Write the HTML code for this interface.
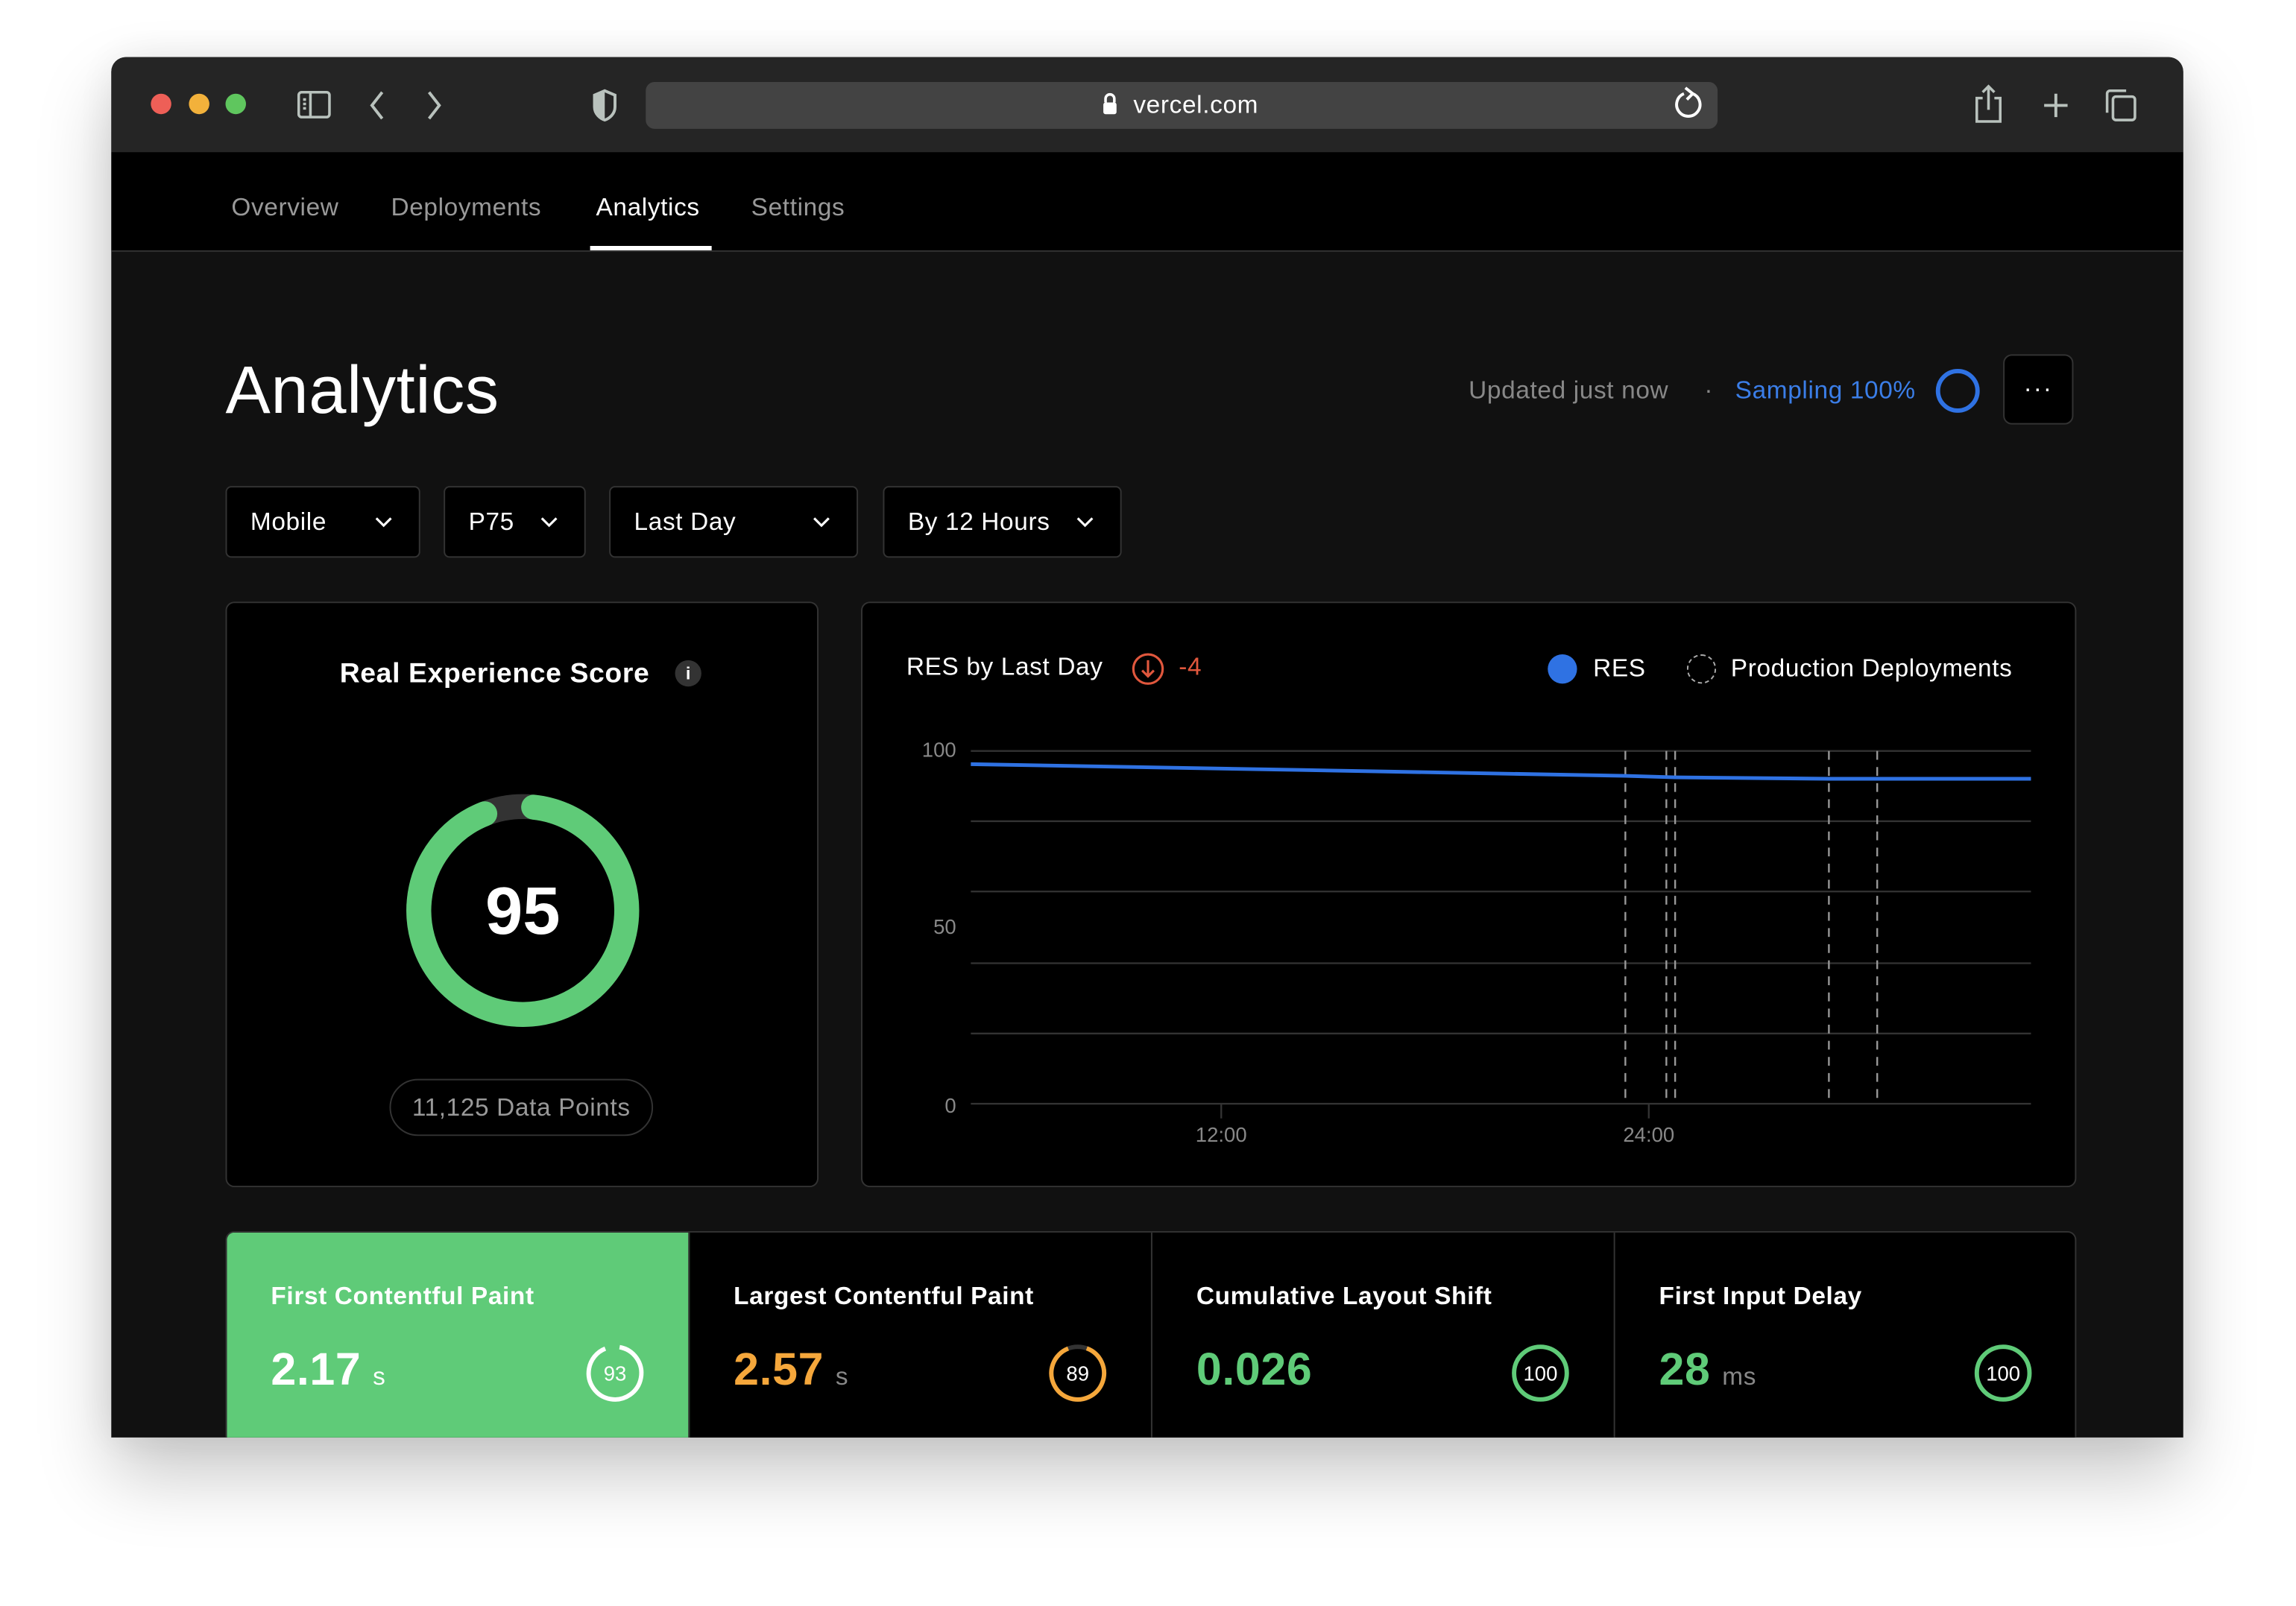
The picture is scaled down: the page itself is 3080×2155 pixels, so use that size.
<!DOCTYPE html>
<html><head><meta charset="utf-8"><style>
html,body{margin:0;padding:0;background:#fff;width:3080px;height:2155px;overflow:hidden}
#w{position:absolute;left:0;top:0;width:1568px;height:1097px;transform:scale(1.96429);transform-origin:0 0;font-family:"Liberation Sans",sans-serif;letter-spacing:0.02em}
.a{position:absolute}
.win{left:76px;top:39px;width:1415px;height:943px;background:#111;border-radius:10px 10px 0 0;overflow:hidden;box-shadow:0 25px 50px rgba(0,0,0,.22),0 0 30px rgba(0,0,0,.08)}
.tb{left:0;top:0;width:1415px;height:65px;background:#252525}
.nav{left:0;top:65px;width:1415px;height:67px;background:#000;border-bottom:1px solid #333}
.t{position:absolute;white-space:nowrap}
.dd{position:absolute;top:293px;background:#000;border:1px solid #333;border-radius:4px;color:#fff;font-size:17px;line-height:47px;box-sizing:border-box;height:49px}
.dd span{position:absolute;left:16px}
.dd svg{position:absolute;top:17px}
.card{position:absolute;background:#000;border:1px solid #333;border-radius:6px;box-sizing:border-box}
.cell{position:absolute;top:0;height:150px;width:316px;border-right:1px solid #333;box-sizing:border-box}
.cell .ti{position:absolute;left:30px;top:34px;font-size:17px;font-weight:bold;color:#fff}
.cell .v{position:absolute;left:30px;top:76px;font-size:31px;font-weight:bold}
.cell .v small{font-size:17px;color:#888;font-weight:normal;margin-left:8px}
.cell svg{position:absolute;left:244px;top:75px;letter-spacing:0}
</style></head><body><div id="w">
<div class="a win">
 <div class="a tb">
  <div class="a" style="left:27px;top:25px;width:14px;height:14px;border-radius:50%;background:#ee5f57"></div>
  <div class="a" style="left:53px;top:25px;width:14px;height:14px;border-radius:50%;background:#f2b13b"></div>
  <div class="a" style="left:78px;top:25px;width:14px;height:14px;border-radius:50%;background:#5fc65e"></div>
  <svg class="a" style="left:126px;top:22px" width="26" height="22" viewBox="0 0 26 22" fill="none" stroke="#b9c2bd" stroke-width="1.8"><rect x="2" y="2" width="21" height="17" rx="2"/><line x1="10" y1="2" x2="10" y2="19"/><line x1="5" y1="7" x2="7" y2="7"/><line x1="5" y1="10" x2="7" y2="10"/><line x1="5" y1="13" x2="7" y2="13"/></svg>
  <svg class="a" style="left:174px;top:22px" width="14" height="22" viewBox="0 0 14 22" fill="none" stroke="#b9c2bd" stroke-width="2"><path d="M11 2 L4 11 L11 20"/></svg>
  <svg class="a" style="left:214px;top:22px" width="14" height="22" viewBox="0 0 14 22" fill="none" stroke="#b9c2bd" stroke-width="2"><path d="M3 2 L10 11 L3 20"/></svg>
  <svg class="a" style="left:328px;top:21px" width="18" height="24" viewBox="0 0 18 24"><path d="M9 2 L16 5 V13 C16 18 12 21 9 22 C6 21 2 18 2 13 V5 Z" fill="none" stroke="#b9c2bd" stroke-width="2"/><path d="M9 2 L2 5 V13 C2 18 6 21 9 22 Z" fill="#b9c2bd"/></svg>
  <div class="a" style="left:365px;top:17px;width:732px;height:32px;background:#434343;border-radius:6px"></div>
  <svg class="a" style="left:676px;top:24px" width="12" height="16" viewBox="0 0 12 16"><path d="M3 7 V4.5 A3 3 0 0 1 9 4.5 V7" fill="none" stroke="#fff" stroke-width="1.8"/><rect x="1.5" y="7" width="9" height="8" rx="1.5" fill="#fff"/></svg>
  <div class="t" style="left:698px;top:23px;font-size:17px;color:#fff">vercel.com</div>
  <svg class="a" style="left:1066px;top:20px" width="22" height="24" viewBox="0 0 22 24" fill="none" stroke="#fff" stroke-width="2"><path d="M14 5 A8 8 0 1 1 8 5"/><path d="M9 1 L14 5 L10 9"/></svg>
  <svg class="a" style="left:1271px;top:18px" width="22" height="28" viewBox="0 0 22 28" fill="none" stroke="#b9c2bd" stroke-width="1.8"><path d="M7 10 H3 V26 H19 V10 H15"/><path d="M11 18 V2 M7 6 L11 2 L15 6"/></svg>
  <svg class="a" style="left:1319px;top:24px" width="18" height="18" viewBox="0 0 18 18" stroke="#b9c2bd" stroke-width="2"><path d="M9 1 V17 M1 9 H17"/></svg>
  <svg class="a" style="left:1360px;top:21px" width="24" height="24" viewBox="0 0 24 24" fill="none" stroke="#b9c2bd" stroke-width="1.8"><rect x="7" y="6" width="15" height="16" rx="2"/><path d="M3 17 V4 A2 2 0 0 1 5 2 H16"/></svg>
 </div>
 <div class="a nav">
  <div class="t" style="left:82px;top:28px;font-size:17px;color:#999">Overview</div>
  <div class="t" style="left:191px;top:28px;font-size:17px;color:#999">Deployments</div>
  <div class="t" style="left:331px;top:28px;font-size:17px;color:#fff">Analytics</div>
  <div class="t" style="left:437px;top:28px;font-size:17px;color:#999">Settings</div>
  <div class="a" style="left:327px;top:64px;width:83px;height:3px;background:#fff"></div>
 </div>
 <div class="t" style="left:78px;top:200px;font-size:46px;color:#fff;font-weight:500">Analytics</div>
 <div class="t" style="left:927px;top:218px;font-size:17px;color:#888">Updated just now</div>
 <div class="t" style="left:1088px;top:218px;font-size:17px;color:#888">·</div>
 <div class="t" style="left:1109px;top:218px;font-size:17px;color:#3b7ee8;font-weight:500">Sampling 100%</div>
 <div class="a" style="left:1246px;top:213px;width:24px;height:24px;border:3px solid #2f72e3;border-radius:50%"></div>
 <div class="a" style="left:1292px;top:203px;width:48px;height:48px;box-sizing:border-box;background:#000;border:1px solid #333;border-radius:6px;color:#fff;text-align:center;line-height:46px;font-size:17px;letter-spacing:1px">···</div>

 <div class="dd" style="left:78px;width:133px"><span>Mobile</span><svg style="left:100px" width="14" height="14" viewBox="0 0 14 14" fill="none" stroke="#fff" stroke-width="1.6"><path d="M2 4 L7 9 L12 4"/></svg></div>
 <div class="dd" style="left:227px;width:97px"><span>P75</span><svg style="left:64px" width="14" height="14" viewBox="0 0 14 14" fill="none" stroke="#fff" stroke-width="1.6"><path d="M2 4 L7 9 L12 4"/></svg></div>
 <div class="dd" style="left:340px;width:170px"><span>Last Day</span><svg style="left:137px" width="14" height="14" viewBox="0 0 14 14" fill="none" stroke="#fff" stroke-width="1.6"><path d="M2 4 L7 9 L12 4"/></svg></div>
 <div class="dd" style="left:527px;width:163px"><span>By 12 Hours</span><svg style="left:130px" width="14" height="14" viewBox="0 0 14 14" fill="none" stroke="#fff" stroke-width="1.6"><path d="M2 4 L7 9 L12 4"/></svg></div>

 <div class="card" style="left:78px;top:372px;width:405px;height:400px">
  <div class="t" style="left:77px;top:38px;font-size:19px;color:#fff;font-weight:bold">Real Experience Score</div>
  <div class="a" style="left:306px;top:39px;width:18px;height:18px;border-radius:50%;background:#333;color:#fff;font-size:12px;text-align:center;line-height:18px;font-weight:bold;letter-spacing:0">i</div>
  <svg class="a" style="left:112px;top:120px;letter-spacing:0" width="180" height="180" viewBox="0 0 180 180">
   <circle cx="90" cy="90" r="71" fill="none" stroke="#333" stroke-width="17"/>
   <circle cx="90" cy="90" r="71" fill="none" stroke="#5fcb78" stroke-width="17" stroke-linecap="round" stroke-dasharray="412 446" transform="rotate(-84 90 90)"/>
   <text x="90" y="106" text-anchor="middle" font-family="Liberation Sans" font-size="46" font-weight="bold" fill="#fff">95</text>
  </svg>
  <div class="a" style="left:111px;top:325px;width:180px;height:39px;border:1px solid #333;border-radius:20px;box-sizing:border-box;color:#999;font-size:17px;text-align:center;line-height:37px">11,125 Data Points</div>
 </div>

 <div class="card" style="left:512px;top:372px;width:830px;height:400px">
  <div class="t" style="left:30px;top:34px;font-size:17px;color:#fff;font-weight:500">RES by Last Day</div>
  <svg class="a" style="left:183px;top:33px" width="24" height="24" viewBox="0 0 24 24" fill="none" stroke="#e0573d" stroke-width="1.6"><circle cx="12" cy="12" r="10"/><path d="M12 6 V17 M8 13 L12 17 L16 13"/></svg>
  <div class="t" style="left:216px;top:34px;font-size:17px;color:#e0573d">-4</div>
  <div class="a" style="left:468px;top:35px;width:20px;height:20px;border-radius:50%;background:#2f72e3"></div>
  <div class="t" style="left:499px;top:35px;font-size:17px;color:#fff">RES</div>
  <div class="a" style="left:563px;top:35px;width:18px;height:18px;border-radius:50%;border:1px dashed #aaa"></div>
  <div class="t" style="left:593px;top:35px;font-size:17px;color:#fff">Production Deployments</div>
  <svg class="a" style="left:0;top:0;letter-spacing:0" width="830" height="400" font-family="Liberation Sans" font-size="14" fill="#888">
   <g stroke="#333" stroke-width="1.2">
    <line x1="74" y1="101" x2="798" y2="101"/><line x1="74" y1="149" x2="798" y2="149"/><line x1="74" y1="197" x2="798" y2="197"/><line x1="74" y1="246" x2="798" y2="246"/><line x1="74" y1="294" x2="798" y2="294"/><line x1="74" y1="342" x2="798" y2="342"/>
    <line x1="245" y1="342" x2="245" y2="352"/><line x1="537" y1="342" x2="537" y2="352"/>
   </g>
   <g stroke="#999" stroke-width="1.2" stroke-dasharray="6 5">
    <line x1="521" y1="101" x2="521" y2="342"/><line x1="549" y1="101" x2="549" y2="342"/><line x1="555" y1="101" x2="555" y2="342"/><line x1="660" y1="101" x2="660" y2="342"/><line x1="693" y1="101" x2="693" y2="342"/>
   </g>
   <polyline points="74,110 300,114 521,118 555,119 660,120 798,120" fill="none" stroke="#2f72e3" stroke-width="2.5"/>
   <text x="64" y="105" text-anchor="end">100</text><text x="64" y="226" text-anchor="end">50</text><text x="64" y="348" text-anchor="end">0</text>
   <text x="245" y="368" text-anchor="middle">12:00</text><text x="537" y="368" text-anchor="middle">24:00</text>
  </svg>
 </div>

 <div class="card" style="left:78px;top:802px;width:1264px;height:160px;overflow:hidden">
  <div class="cell" style="left:0;background:#5fcb78;border-color:#333">
   <div class="ti">First Contentful Paint</div>
   <div class="v" style="color:#fff">2.17<small style="color:#fff">s</small></div>
   <svg width="42" height="42" viewBox="0 0 42 42"><circle cx="21" cy="21" r="18" fill="none" stroke="#fff" stroke-width="3" stroke-dasharray="103 113" transform="rotate(-80 21 21)"/><text x="21" y="26" text-anchor="middle" font-family="Liberation Sans" font-size="14" fill="#fff">93</text></svg>
  </div>
  <div class="cell" style="left:316px">
   <div class="ti">Largest Contentful Paint</div>
   <div class="v" style="color:#f5a73b">2.57<small>s</small></div>
   <svg width="42" height="42" viewBox="0 0 42 42"><circle cx="21" cy="21" r="18" fill="none" stroke="#333" stroke-width="3"/><circle cx="21" cy="21" r="18" fill="none" stroke="#f5a73b" stroke-width="3" stroke-dasharray="100 113" transform="rotate(-70 21 21)"/><text x="21" y="26" text-anchor="middle" font-family="Liberation Sans" font-size="14" fill="#fff">89</text></svg>
  </div>
  <div class="cell" style="left:632px">
   <div class="ti">Cumulative Layout Shift</div>
   <div class="v" style="color:#5fcb78">0.026</div>
   <svg width="42" height="42" viewBox="0 0 42 42"><circle cx="21" cy="21" r="18" fill="none" stroke="#5fcb78" stroke-width="3"/><text x="21" y="26" text-anchor="middle" font-family="Liberation Sans" font-size="14" fill="#fff">100</text></svg>
  </div>
  <div class="cell" style="left:948px;border-right:none">
   <div class="ti">First Input Delay</div>
   <div class="v" style="color:#5fcb78">28<small>ms</small></div>
   <svg width="42" height="42" viewBox="0 0 42 42"><circle cx="21" cy="21" r="18" fill="none" stroke="#5fcb78" stroke-width="3"/><text x="21" y="26" text-anchor="middle" font-family="Liberation Sans" font-size="14" fill="#fff">100</text></svg>
  </div>
 </div>
</div>
</div></body></html>
